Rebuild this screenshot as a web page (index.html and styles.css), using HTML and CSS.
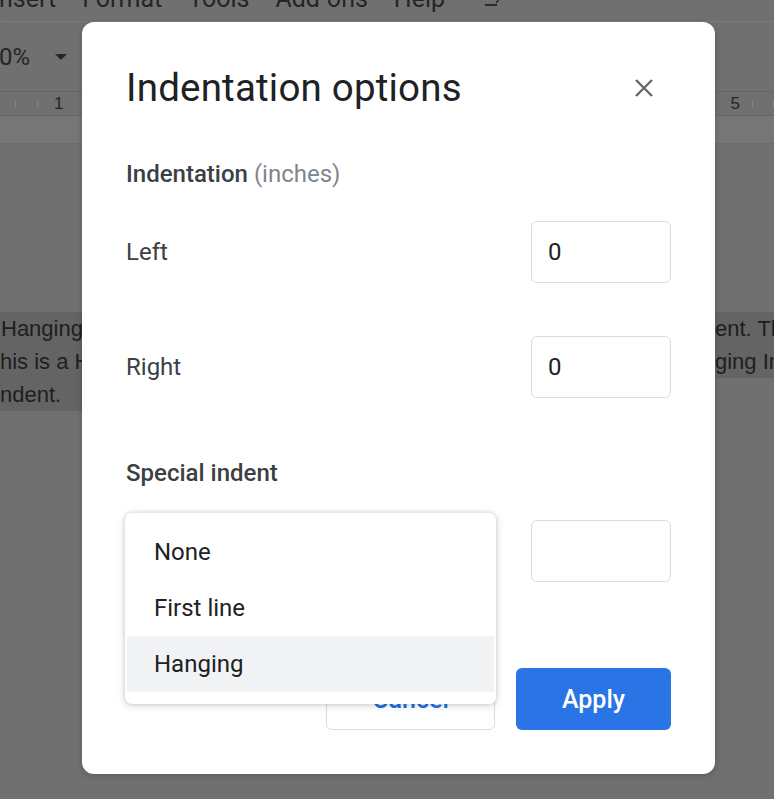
FILE: index.html
```html
<!DOCTYPE html>
<html>
<head>
<meta charset="utf-8">
<link rel="stylesheet" href="styles.css">
</head>
<body>
<div class="app">
  <div class="menubar">
    <span class="menu-item">nsert</span>
    <span class="menu-item">Format</span>
    <span class="menu-item">Tools</span>
    <span class="menu-item">Add-ons</span>
    <span class="menu-item">Help</span>
    <svg class="menu-icon" width="18" height="10" viewBox="0 0 18 10"><path d="M2 8h12" stroke="#2a2a2a" stroke-width="2"/><path d="M13 6l4-5" stroke="#2a2a2a" stroke-width="1.5"/></svg>
  </div>
  <div class="toolbar">
    <span class="zoom">0%</span>
    <span class="caret"></span>
    <span class="tsep"></span>
  </div>
  <div class="ruler">
    <span class="tick t1"></span>
    <span class="tick t2"></span>
    <span class="rnum n1">1</span>
    <span class="tick t3"></span>
    <span class="rspacer"></span>
    <span class="rnum n5">5</span>
    <span class="tick t4"></span>
    <span class="tick t5"></span>
  </div>
  <div class="band"></div>
  <div class="page">
    <div class="line"><span class="left hl first">Hanging Indent. This is a</span><span class="right hl">ent. This</span></div>
    <div class="line"><span class="left hl">his is a Hanging Indent.</span><span class="right hl">ging Indent</span></div>
    <div class="line"><span class="left hl">ndent.</span><span class="right"></span></div>
  </div>

  <div class="dialog">
    <div class="dialog-header">
      <h1 class="title">Indentation options</h1>
      <svg class="close" width="20" height="20" viewBox="0 0 20 20"><path d="M2 2L18 18M18 2L2 18" stroke="#5f6368" stroke-width="2.2" fill="none"/></svg>
    </div>
    <div class="section-title sec1">Indentation <span class="unit">(inches)</span></div>
    <div class="field-row row1">
      <span class="label">Left</span>
      <div class="input">0</div>
    </div>
    <div class="field-row row2">
      <span class="label">Right</span>
      <div class="input">0</div>
    </div>
    <div class="section-title sec2">Special indent</div>
    <div class="field-row row3">
      <div class="select">Hanging</div>
      <div class="input"></div>
    </div>
    <div class="actions">
      <div class="btn cancel">Cancel</div>
      <div class="btn apply">Apply</div>
    </div>

    <div class="dropdown">
      <div class="option">None</div>
      <div class="option">First line</div>
      <div class="option active">Hanging</div>
    </div>
  </div>
</div>
</body>
</html>
```
FILE: styles.css
```css
* { box-sizing: border-box; }
html, body { margin: 0; padding: 0; }
body {
  width: 774px;
  height: 799px;
  overflow: hidden;
  background: #707070;
  font-family: Roboto, "Liberation Sans", sans-serif;
}
.app {
  position: relative;
  width: 774px;
  height: 799px;
  overflow: hidden;
  background: #707070;
}

/* background docs UI */
.menubar {
  height: 22px;
  display: flex;
  align-items: flex-end;
  border-bottom: 1px dotted #868686;
  overflow: hidden;
}
.menu-item {
  font-size: 25px;
  line-height: 25px;
  color: #252525;
  margin-bottom: 10px;
  margin-right: 26px;
}
.menu-item:first-child { margin-left: -1px; }
.menu-icon { margin-bottom: 14px; margin-left: 12px; }

.toolbar {
  height: 70px;
  display: flex;
  align-items: center;
  border-bottom: 1px solid #666;
}
.zoom {
  font-size: 24px;
  color: #252525;
  margin-left: -1px;
}
.caret {
  width: 0; height: 0;
  border-left: 6px solid transparent;
  border-right: 6px solid transparent;
  border-top: 6px solid #252525;
  margin-left: 25px;
}
.tsep {
  width: 1px;
  height: 36px;
  background: #5e5e5e;
  margin-left: 16px;
}

.ruler {
  height: 24px;
  display: flex;
  align-items: center;
  border-bottom: 1px solid #666;
}
.tick { width: 1px; height: 6px; background: #888; }
.t1 { margin-left: 15px; }
.t2 { margin-left: 21px; }
.rnum { font-size: 17px; color: #252525; font-family: "Liberation Sans", sans-serif; }
.n1 { margin-left: 16px; }
.t3 { margin-left: 21px; }
.rspacer { flex: 1; }
.n5 { margin-right: 12px; }
.t4 { margin-right: 20px; }
.t5 { margin-right: 0; }

.band {
  height: 28px;
  background: #767676;
  border-bottom: 1px solid #6c6c6c;
}

.page {
  padding-top: 168px;
  font-family: "Liberation Sans", Arial, sans-serif;
  font-size: 22px;
  color: #1e1e1e;
}
.line {
  height: 33px;
  display: flex;
  justify-content: space-between;
  align-items: center;
  white-space: nowrap;
}
.left { padding-right: 8px; line-height: 33px; min-width: 100px; }
.left.first { padding-left: 1px; }
.right { width: 59px; overflow: hidden; line-height: 33px; height: 33px; }
.hl { background: #646464; }

/* dialog */
.dialog {
  position: absolute;
  left: 82px;
  top: 22px;
  width: 633px;
  height: 752px;
  background: #fff;
  border-radius: 12px;
  padding: 44px 44px 44px;
  box-shadow: 0 2px 6px rgba(0,0,0,0.18);
  color: #3c4043;
}
.dialog-header {
  height: 44px;
  display: flex;
  align-items: center;
  justify-content: space-between;
}
.title {
  margin: 0;
  font-size: 38.5px;
  font-weight: 400;
  line-height: 44px;
  color: #202124;
  letter-spacing: 0.2px;
}
.close { margin-right: 17px; }

.section-title {
  font-size: 24px;
  line-height: 28px;
  font-weight: 500;
  color: #3c4043;
}
.unit { font-weight: 400; color: #80868b; }
.sec1 { margin-top: 50px; }
.sec2 { margin-top: 61px; }

.field-row {
  height: 62px;
  display: flex;
  align-items: center;
  justify-content: space-between;
}
.row1 { margin-top: 33px; }
.row2 { margin-top: 53px; }
.row3 { margin-top: 33px; }
.label { font-size: 24px; color: #3c4043; }
.input {
  width: 140px;
  height: 62px;
  border: 1px solid #dadce0;
  border-radius: 6px;
  padding-left: 16px;
  font-size: 24px;
  line-height: 60px;
  color: #202124;
}
.select {
  width: 369px;
  height: 62px;
  border: 1px solid #dadce0;
  border-radius: 6px;
  padding-left: 16px;
  font-size: 24px;
  line-height: 60px;
}

.actions {
  margin-top: 86px;
  display: flex;
  justify-content: flex-end;
  gap: 21px;
}
.btn {
  height: 62px;
  border-radius: 6px;
  display: flex;
  align-items: center;
  justify-content: center;
  font-size: 25px;
  font-weight: 500;
}
.cancel {
  width: 169px;
  border: 1px solid #dadce0;
  color: #1a73e8;
}
.apply {
  width: 155px;
  background: #2a74e6;
  color: #fff;
}

.dropdown {
  position: absolute;
  left: 43px;
  top: 491px;
  width: 371px;
  height: 191px;
  background: #fff;
  border: 2px solid #fff;
  border-radius: 7px;
  padding: 9px 0 10px;
  box-shadow: 0 0 3px 2px rgba(0,0,0,0.07), 0 2px 10px rgba(0,0,0,0.12);
}
.option {
  height: 56px;
  line-height: 56px;
  padding-left: 27px;
  font-size: 24px;
  color: #202124;
}
.option.active { background: #f1f3f4; }
```
